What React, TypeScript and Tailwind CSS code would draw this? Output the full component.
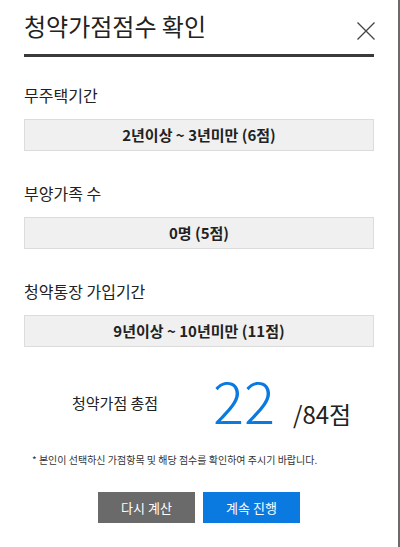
const items = [
  { label: '무주택기간', value: '2년이상 ~ 3년미만 (6점)' },
  { label: '부양가족 수', value: '0명 (5점)' },
  { label: '청약통장 가입기간', value: '9년이상 ~ 10년미만 (11점)' },
];

const App = () => {
  return (
    <div
      className="w-[400px] h-[547px] bg-white border-r-2 border-[#6b6b6b] px-6 text-[#222]"
      style={{ fontFamily: '"Noto Sans CJK KR", "Noto Sans", sans-serif' }}
    >
      {/* Header */}
      <div className="flex items-center justify-between pt-[8px] pb-[10px] border-b-[3px] border-[#3a3a3a]">
        <h1 className="text-[24px] leading-[36px] font-normal">청약가점점수 확인</h1>
        <svg width="18" height="18" viewBox="0 0 18 18" className="mt-[10px] mr-[-1px] text-[#444]">
          <path d="M0.5 0.5 L17.5 17.5 M17.5 0.5 L0.5 17.5" stroke="currentColor" strokeWidth="1.3" fill="none" />
        </svg>
      </div>

      {/* Score items */}
      {items.map((item, index) => (
        <div key={index} className={index === 0 ? 'mt-[26px]' : 'mt-[30px]'}>
          <p className="text-[16px] leading-[24px]">{item.label}</p>
          <div className="mt-[12px] h-[32px] flex items-center justify-center bg-[#f0f0f0] border border-[#dcdcdc] text-[15px] font-bold">
            {item.value}
          </div>
        </div>
      ))}

      {/* Total */}
      <div className="flex items-center mt-[22px] pl-[48px]">
        <span className="w-[141px] text-[15px] leading-[24px] mt-[8px]">청약가점 총점</span>
        <div className="flex items-baseline">
          <span className="text-[58px] leading-[60px] font-light text-[#0a7ae0]">22</span>
          <span className="ml-[18px] text-[24px] leading-[30px]">/84점</span>
        </div>
      </div>

      <p className="mt-[24px] ml-2 text-[10px] leading-[14px] text-[#333]">
        * 본인이 선택하신 가점항목 및 해당 점수를 확인하여 주시기 바랍니다.
      </p>

      {/* Buttons */}
      <div className="flex justify-center gap-2 mt-[25px]">
        <button className="w-[97px] h-[31px] bg-[#6a6a6a] text-white text-[13px]">다시 계산</button>
        <button className="w-[97px] h-[31px] bg-[#0a7ae0] text-white text-[13px]">계속 진행</button>
      </div>
    </div>
  );
};

export default App;
